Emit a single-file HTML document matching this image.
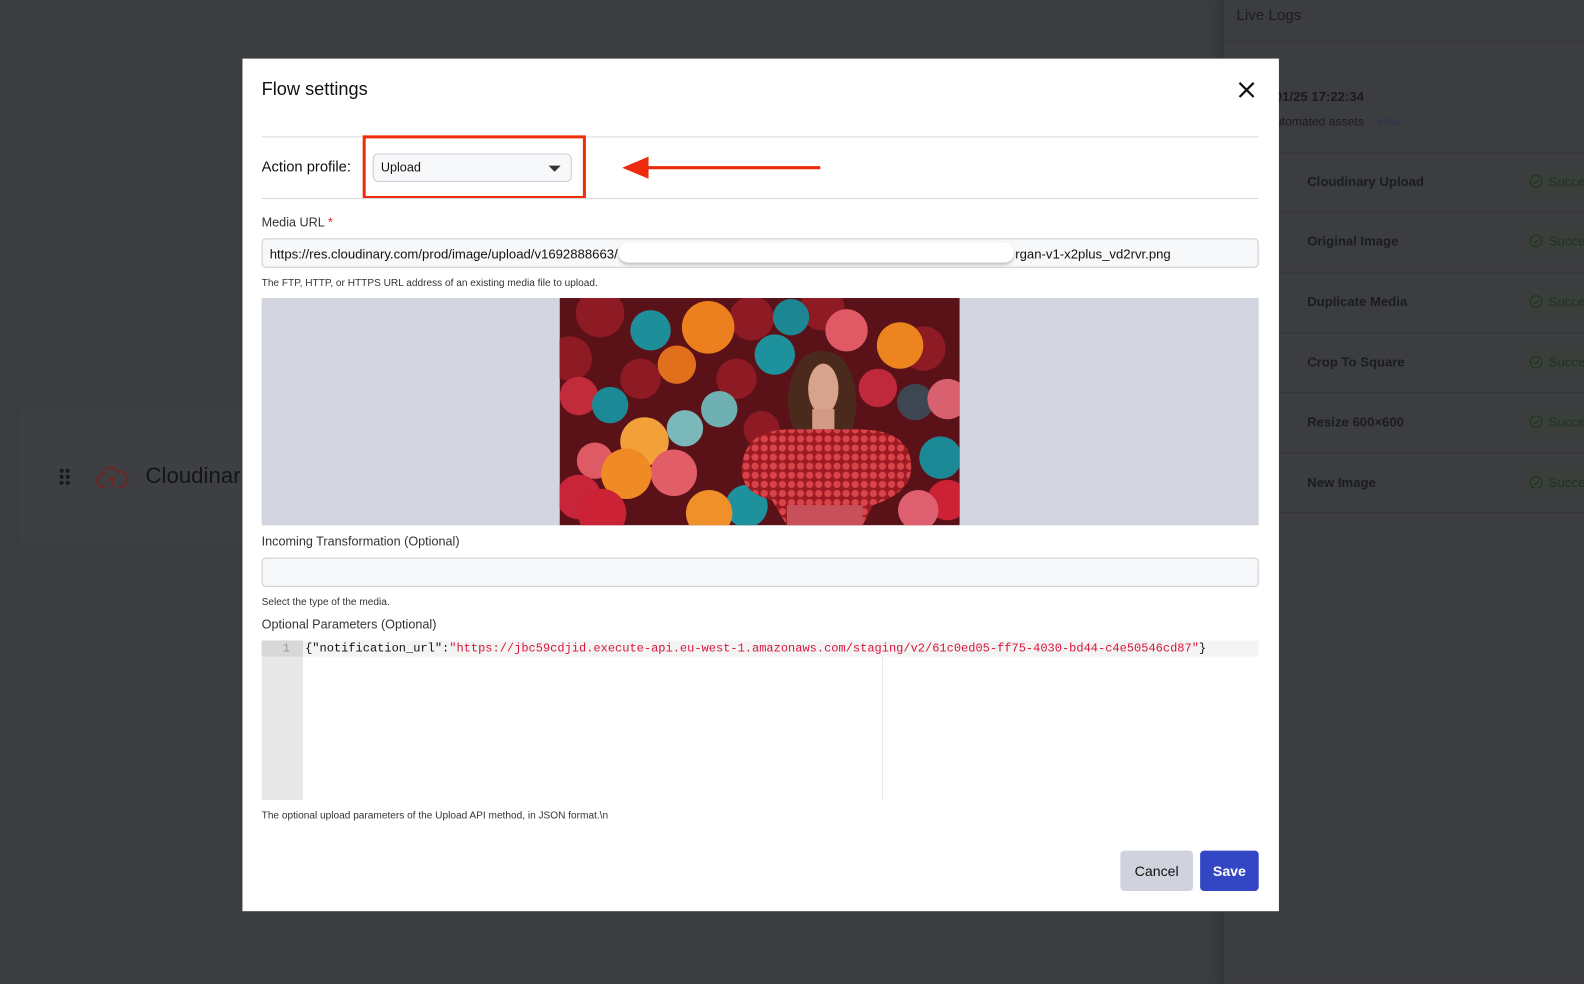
<!DOCTYPE html>
<html><head><meta charset="utf-8"><style>
*{box-sizing:border-box;margin:0;padding:0}
html,body{width:1584px;height:974px;overflow:hidden;background:#3a3d40}
body{font-family:"Liberation Sans",sans-serif}
#w{position:absolute;left:0;top:0;width:1568px;height:965px;transform:scale(1.0102);transform-origin:0 0}
.abs{position:absolute}
.rp{left:1212px;top:0;width:372px;height:974px;background:#3c3d3f;box-shadow:-6px 0 10px rgba(0,0,0,.15)}
.rp .t{color:#1c1d1f;font-size:15px}
.row{position:absolute;left:0;width:372px;height:60px;border-top:1px solid #353638}
.row span.n{position:absolute;left:82px;top:21px;font-weight:bold;font-size:13px;color:#1a1c20}
.row .b{position:absolute;left:296px;top:16px;width:90px;height:25px;border-radius:13px;background:#3b3f3c;color:#1c331d;font-size:13px;padding:5px 0 0 25px}
.row .b svg{position:absolute;left:6px;top:6px}
.modal{left:240px;top:58px;width:1026px;height:844px;background:#fff}
.lbl{font-size:12.5px;color:#333}
.help{font-size:10px;color:#333}
.inp{border:1px solid #c9ccd3;border-radius:4px;background:#f7f8fa}
</style></head><body><div id="w">
<div class="abs" style="left:19px;top:404px;width:230px;height:134px;background:#3d3f42;border-radius:10px"></div>
<div class="abs" style="left:58px;top:463px;width:12px;height:18px">
<svg width="12" height="18"><g fill="#151a26"><circle cx="3" cy="3" r="2"/><circle cx="9" cy="3" r="2"/><circle cx="3" cy="9" r="2"/><circle cx="9" cy="9" r="2"/><circle cx="3" cy="15" r="2"/><circle cx="9" cy="15" r="2"/></g></svg></div>
<svg class="abs" style="left:95px;top:458px" width="32" height="28" viewBox="0 0 32 28"><path d="M9 24H7a6 6 0 0 1 0-12 8 8 0 0 1 15-3 6 6 0 0 1 3 15h-3M16 24V14M12 18l4-4 4 4" fill="none" stroke="#6b2626" stroke-width="2"/></svg>
<div class="abs" style="left:144px;top:458px;font-size:22px;color:#141517">Cloudinar</div>
<div class="abs rp">
<div class="abs t" style="left:12px;top:7px">Live Logs</div>
<div class="abs" style="left:0;top:41px;width:372px;border-top:1px solid #353638"></div>
<div class="abs" style="left:50px;top:88px;font-size:13px;font-weight:bold;color:#1a1b1d">01/25 17:22:34</div>
<div class="abs" style="left:50px;top:113px;font-size:12px;color:#1a1b1d">utomated assets <span style="color:#2b3550;margin-left:10px">view</span></div>
<div class="row" style="top:150px"><span class="n">Cloudinary Upload</span><div class="b"><svg width="13" height="13"><circle cx="6.5" cy="6.5" r="5.8" fill="none" stroke="#1c331d"/><path d="M4 6.8l1.8 1.8L9.3 5" fill="none" stroke="#1c331d"/></svg>Succe</div></div>
<div class="row" style="top:209px"><span class="n">Original Image</span><div class="b"><svg width="13" height="13"><circle cx="6.5" cy="6.5" r="5.8" fill="none" stroke="#1c331d"/><path d="M4 6.8l1.8 1.8L9.3 5" fill="none" stroke="#1c331d"/></svg>Succe</div></div>
<div class="row" style="top:269px"><span class="n">Duplicate Media</span><div class="b"><svg width="13" height="13"><circle cx="6.5" cy="6.5" r="5.8" fill="none" stroke="#1c331d"/><path d="M4 6.8l1.8 1.8L9.3 5" fill="none" stroke="#1c331d"/></svg>Succe</div></div>
<div class="row" style="top:329px"><span class="n">Crop To Square</span><div class="b"><svg width="13" height="13"><circle cx="6.5" cy="6.5" r="5.8" fill="none" stroke="#1c331d"/><path d="M4 6.8l1.8 1.8L9.3 5" fill="none" stroke="#1c331d"/></svg>Succe</div></div>
<div class="row" style="top:388px"><span class="n">Resize 600×600</span><div class="b"><svg width="13" height="13"><circle cx="6.5" cy="6.5" r="5.8" fill="none" stroke="#1c331d"/><path d="M4 6.8l1.8 1.8L9.3 5" fill="none" stroke="#1c331d"/></svg>Succe</div></div>
<div class="row" style="top:448px"><span class="n">New Image</span><div class="b"><svg width="13" height="13"><circle cx="6.5" cy="6.5" r="5.8" fill="none" stroke="#1c331d"/><path d="M4 6.8l1.8 1.8L9.3 5" fill="none" stroke="#1c331d"/></svg>Succe</div></div>
<div class="row" style="top:507px;height:1px"></div>
</div>
<div class="abs modal">
<div class="abs" style="left:19px;top:20px;font-size:18px;color:#111">Flow settings</div>
<svg class="abs" style="left:986px;top:23px" width="16" height="16"><path d="M1 1L15 15M15 1L1 15" stroke="#111" stroke-width="2.2"/></svg>
<div class="abs" style="left:19px;top:77px;width:987px;border-top:1px solid #d8dae0"></div>
<div class="abs" style="left:19px;top:100px;font-size:14.6px;color:#111">Action profile:</div>
<div class="abs inp" style="left:129px;top:94px;width:197px;height:28px;border-radius:5px;font-size:12.5px;padding:6px 0 0 7px;color:#111">Upload
<div class="abs" style="left:173px;top:11px;width:0;height:0;border-left:6px solid transparent;border-right:6px solid transparent;border-top:6px solid #333"></div></div>
<div class="abs" style="left:119px;top:76px;width:221px;height:63px;border:3px solid #f02d0a"></div>
<div class="abs" style="left:19px;top:138px;width:987px;border-top:1px solid #d8dae0"></div>
<svg class="abs" style="left:374px;top:94px" width="200" height="28"><path d="M22 14H198" stroke="#ee2a0e" stroke-width="3"/><path d="M2 14L28 3V25Z" fill="#ee2a0e"/></svg>
<div class="abs lbl" style="left:19px;top:155px">Media URL <span style="color:#d22">*</span></div>
<div class="abs inp" style="left:19px;top:178px;width:987px;height:29px;font-size:13px;padding:7px 0 0 7px;color:#111">https://res.cloudinary.com/prod/image/upload/v1692888663/<span style="position:absolute;left:745px;top:7px">rgan-v1-x2plus_vd2rvr.png</span></div>
<div class="abs" style="left:372px;top:182px;width:392px;height:20px;background:#fff;border-radius:10px;box-shadow:0 2px 3px rgba(0,0,0,.25)"></div>
<div class="abs help" style="left:19px;top:217px">The FTP, HTTP, or HTTPS URL address of an existing media file to upload.</div>
<div class="abs" style="left:19px;top:237px;width:987px;height:225px;background:#d3d6e0"></div>
<svg class="abs" style="left:314px;top:237px" width="396" height="225" viewBox="0 0 396 225">
<defs><pattern id="dots" width="9" height="9" patternUnits="userSpaceOnUse"><rect width="9" height="9" fill="#9c1a22"/><circle cx="4.5" cy="4.5" r="3.6" fill="#d9434a"/></pattern></defs>
<rect width="396" height="225" fill="#5a1218"/>
<g fill="#8e1a24"><circle cx="40" cy="15" r="24"/><circle cx="190" cy="20" r="22"/><circle cx="260" cy="10" r="22"/><circle cx="10" cy="60" r="22"/><circle cx="175" cy="80" r="20"/><circle cx="200" cy="130" r="18"/><circle cx="230" cy="180" r="20"/><circle cx="300" cy="150" r="18"/><circle cx="80" cy="80" r="20"/><circle cx="360" cy="50" r="22"/></g>
<circle cx="19" cy="97" r="19" fill="#c22c3a"/>
<circle cx="90" cy="32" r="20" fill="#1e8f9a"/><circle cx="147" cy="29" r="26" fill="#ec801e"/><circle cx="229" cy="19" r="18" fill="#1c8692"/>
<circle cx="213" cy="56" r="20" fill="#1d929c"/><circle cx="284" cy="32" r="21" fill="#df5a64"/><circle cx="337" cy="47" r="23" fill="#ec8420"/>
<circle cx="116" cy="66" r="19" fill="#e0701c"/><circle cx="50" cy="106" r="18" fill="#1b8a96"/><circle cx="158" cy="110" r="18" fill="#6fb0b2"/>
<circle cx="315" cy="89" r="19" fill="#c0293c"/><circle cx="352" cy="103" r="18" fill="#3e4652"/><circle cx="384" cy="100" r="20" fill="#d9606e"/>
<circle cx="124" cy="129" r="18" fill="#7ab8ba"/><circle cx="35" cy="161" r="18" fill="#de5a64"/><circle cx="84" cy="142" r="24" fill="#f2a03a"/>
<circle cx="113" cy="173" r="23" fill="#e25e66"/><circle cx="66" cy="174" r="25" fill="#ef8a24"/><circle cx="19" cy="197" r="22" fill="#c8243a"/>
<circle cx="42" cy="213" r="24" fill="#cc2236"/><circle cx="185" cy="206" r="21" fill="#1e929c"/><circle cx="148" cy="213" r="23" fill="#f0902a"/>
<circle cx="377" cy="158" r="21" fill="#1c8a96"/><circle cx="384" cy="200" r="20" fill="#cc2234"/><circle cx="355" cy="210" r="20" fill="#de6070"/>
<path d="M232 130C222 110 225 80 238 62 250 48 275 50 284 66 296 86 296 115 288 134Z" fill="#4a2a1c"/>
<ellipse cx="261" cy="90" rx="15" ry="25" fill="#d8a38c"/>
<rect x="250" y="110" width="22" height="20" fill="#d39a86"/>
<path d="M180 170C182 140 200 130 230 130H295C330 130 348 142 348 168 348 190 325 200 310 205L300 225H225L210 200C190 195 180 185 180 170Z" fill="url(#dots)"/>
<rect x="225" y="205" width="75" height="20" fill="#c8505a"/>
</svg>
<div class="abs lbl" style="left:19px;top:471px">Incoming Transformation (Optional)</div>
<div class="abs inp" style="left:19px;top:494px;width:987px;height:29px"></div>
<div class="abs help" style="left:19px;top:533px">Select the type of the media.</div>
<div class="abs lbl" style="left:19px;top:553px">Optional Parameters (Optional)</div>
<div class="abs" style="left:19px;top:576px;width:41px;height:158px;background:#e8e8e8"></div>
<div class="abs" style="left:19px;top:576px;width:41px;height:16px;background:#d8d8d8;color:#999;font:12px 'Liberation Mono',monospace;text-align:right;padding:1px 13px 0 0">1</div>
<div class="abs" style="left:60px;top:576px;width:946px;height:16px;background:#f4f4f4"></div>
<div class="abs" style="left:633px;top:592px;height:142px;border-left:1px solid #e4e4e4"></div>
<div class="abs" style="left:62px;top:576px;font:11.9px 'Liberation Mono',monospace;color:#111;white-space:nowrap;line-height:16px">{"notification_url":<span style="color:#d8163a">"https://jbc59cdjid.execute-api.eu-west-1.amazonaws.com/staging/v2/61c0ed05-ff75-4030-bd44-c4e50546cd87"</span>}</div>
<div class="abs help" style="left:19px;top:744px">The optional upload parameters of the Upload API method, in JSON format.\n</div>
<div class="abs" style="left:869px;top:784px;width:72px;height:40px;background:#d0d3dd;border-radius:4px;font-size:14px;color:#111;text-align:center;line-height:40px">Cancel</div>
<div class="abs" style="left:948px;top:784px;width:58px;height:40px;background:#3347c4;border-radius:4px;font-size:14px;font-weight:bold;color:#fff;text-align:center;line-height:40px">Save</div>
</div>
</div></body></html>
